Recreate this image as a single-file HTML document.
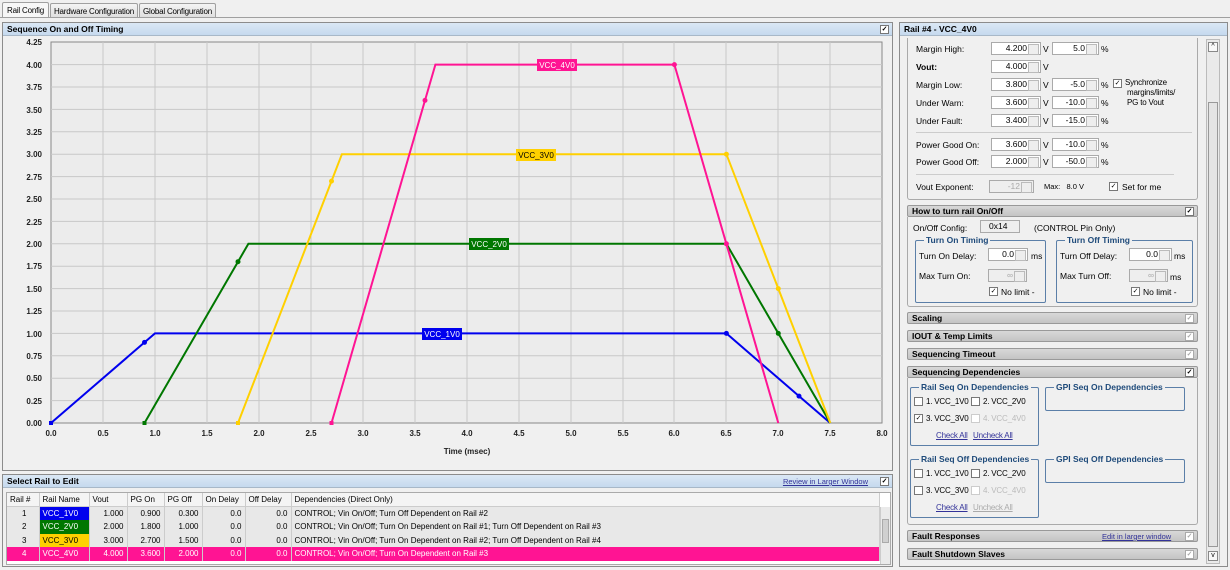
<!DOCTYPE html>
<html><head><meta charset="utf-8"><style>
*{box-sizing:border-box;margin:0;padding:0}
body{width:1230px;height:570px;background:#f0f0f0;font-family:"Liberation Sans",sans-serif;font-size:8.5px;color:#000;position:relative;overflow:hidden}
.a{position:absolute}
.tab{position:absolute;top:3px;height:15px;border:1px solid #a0a0a0;border-bottom:none;background:linear-gradient(#f4f4f4,#dedede);font-size:8px;padding:3px 0 0;text-align:center;border-radius:2px 2px 0 0;white-space:nowrap;overflow:hidden;letter-spacing:-0.2px}
.panel{position:absolute;border:1px solid #8c8c8c;background:#f0f0f0}
.hdr{position:absolute;left:0;right:0;top:0;height:13px;background:linear-gradient(#dbe8f5,#c5d9ee);border-bottom:1px solid #a8b8c8;font-weight:bold;font-size:8.5px;padding:1px 4px}
.cb{position:absolute;width:9px;height:9px;border:1px solid #777;background:#fff;font-size:7px;line-height:7px;text-align:center}
.sec{position:absolute;left:907px;width:291px;height:12px;background:linear-gradient(#d8d8d8,#c4c4c4);border:1px solid #999;border-radius:2px;font-weight:bold;font-size:8.5px;padding:0 4px;line-height:11px}
.sec .cb{right:3px;top:1px;border-color:#aaa;color:#aaa}
.in{position:absolute;height:13px;background:#fff;border:1px solid #aaa;text-align:right;padding-right:13px;line-height:11px;font-size:8.5px}
.in:after{content:"";position:absolute;right:1px;top:1px;width:9px;height:9px;border:1px solid #bbb;background:#eee}
.dis{background:#eee;color:#aaa}
.l{position:absolute;font-size:8.5px;white-space:nowrap}
.s{font-size:8px;letter-spacing:-0.2px}
.grp{position:absolute;border:1px solid #5b7fa8;border-radius:2px}
.gt{position:absolute;top:-6px;left:8px;background:#f0f0f0;color:#1e4a7a;font-weight:bold;padding:0 2px;font-size:8.5px;white-space:nowrap}
.lnk{color:#333399;text-decoration:underline}
table{border-collapse:collapse;font-size:8px}
td{height:13.5px;border-right:1px solid #ccc;padding:0 3px;white-space:nowrap}
</style></head><body>
<div class="tab" style="left:2px;top:2px;width:47px;height:16px;background:#f7f7f7">Rail Config</div>
<div class="tab" style="left:50px;width:88px">Hardware Configuration</div>
<div class="tab" style="left:139px;width:77px">Global Configuration</div>
<div class="a" style="left:0;top:17px;width:1230px;border-top:1px solid #a0a0a0"></div>

<div class="panel" style="left:2px;top:22px;width:891px;height:449px">
<div class="hdr">Sequence On and Off Timing<div class="cb" style="right:3px;top:2px">✓</div></div>
</div>
<svg class="a" style="left:0;top:0" width="895" height="470" font-family="Liberation Sans" font-size="8" font-weight="bold">
<rect x="51" y="42" width="831" height="381" fill="#ececec" stroke="#888"/>
<g stroke="#c8c8c8" stroke-width="1">
<line x1="103" y1="42" x2="103" y2="423"/><line x1="155" y1="42" x2="155" y2="423"/><line x1="207" y1="42" x2="207" y2="423"/><line x1="259" y1="42" x2="259" y2="423"/><line x1="311" y1="42" x2="311" y2="423"/><line x1="363" y1="42" x2="363" y2="423"/><line x1="415" y1="42" x2="415" y2="423"/><line x1="467" y1="42" x2="467" y2="423"/><line x1="519" y1="42" x2="519" y2="423"/><line x1="571" y1="42" x2="571" y2="423"/><line x1="623" y1="42" x2="623" y2="423"/><line x1="674" y1="42" x2="674" y2="423"/><line x1="726" y1="42" x2="726" y2="423"/><line x1="778" y1="42" x2="778" y2="423"/><line x1="830" y1="42" x2="830" y2="423"/>
<line x1="51" y1="400.6" x2="882" y2="400.6"/><line x1="51" y1="378.2" x2="882" y2="378.2"/><line x1="51" y1="355.8" x2="882" y2="355.8"/><line x1="51" y1="333.4" x2="882" y2="333.4"/><line x1="51" y1="311" x2="882" y2="311"/><line x1="51" y1="288.6" x2="882" y2="288.6"/><line x1="51" y1="266.2" x2="882" y2="266.2"/><line x1="51" y1="243.8" x2="882" y2="243.8"/><line x1="51" y1="221.4" x2="882" y2="221.4"/><line x1="51" y1="199" x2="882" y2="199"/><line x1="51" y1="176.6" x2="882" y2="176.6"/><line x1="51" y1="154.2" x2="882" y2="154.2"/><line x1="51" y1="131.8" x2="882" y2="131.8"/><line x1="51" y1="109.4" x2="882" y2="109.4"/><line x1="51" y1="87" x2="882" y2="87"/><line x1="51" y1="64.6" x2="882" y2="64.6"/>
</g>
<g text-anchor="end" fill="#222">
<text x="42" y="426">0.00</text><text x="42" y="404">0.25</text><text x="42" y="381">0.50</text><text x="42" y="359">0.75</text><text x="42" y="337">1.00</text><text x="42" y="314">1.25</text><text x="42" y="292">1.50</text><text x="42" y="269">1.75</text><text x="42" y="247">2.00</text><text x="42" y="225">2.25</text><text x="42" y="202">2.50</text><text x="42" y="180">2.75</text><text x="42" y="157">3.00</text><text x="42" y="135">3.25</text><text x="42" y="113">3.50</text><text x="42" y="90">3.75</text><text x="42" y="68">4.00</text><text x="42" y="45">4.25</text>
</g>
<g text-anchor="middle" fill="#222">
<text x="51" y="436">0.0</text><text x="103" y="436">0.5</text><text x="155" y="436">1.0</text><text x="207" y="436">1.5</text><text x="259" y="436">2.0</text><text x="311" y="436">2.5</text><text x="363" y="436">3.0</text><text x="415" y="436">3.5</text><text x="467" y="436">4.0</text><text x="519" y="436">4.5</text><text x="571" y="436">5.0</text><text x="623" y="436">5.5</text><text x="674" y="436">6.0</text><text x="726" y="436">6.5</text><text x="778" y="436">7.0</text><text x="830" y="436">7.5</text><text x="882" y="436">8.0</text>
<text x="467" y="454">Time (msec)</text>
</g>
<g fill="none" stroke-width="2">
<polyline stroke="#0000ee" points="51,423 144.5,342.4 155,333.4 726.4,333.4 799,396.1 830.3,423"/>
<polyline stroke="#007700" points="144.5,423 238,261.7 248.4,243.8 726.4,243.8 778.3,333.4 830.3,423"/>
<polyline stroke="#ffd000" points="238,423 331.5,181.1 341.9,154.2 726.4,154.2 778.3,288.6 830.3,423"/>
<polyline stroke="#ff1493" points="331.5,423 425,100.4 435.4,64.6 674.4,64.6 778.3,423"/>
</g>
<g fill="#0000ee"><rect x="49" y="421" width="4" height="4"/><circle cx="144.5" cy="342.4" r="2.5"/><circle cx="726.4" cy="333.4" r="2.5"/><circle cx="799" cy="396.1" r="2.5"/></g>
<g fill="#007700"><rect x="142.5" y="421" width="4" height="4"/><circle cx="238" cy="261.7" r="2.5"/><circle cx="778.3" cy="333.4" r="2.5"/></g>
<g fill="#ffd000"><rect x="236" y="421" width="4" height="4"/><circle cx="331.5" cy="181.1" r="2.5"/><circle cx="726.4" cy="154.2" r="2.5"/><circle cx="778.3" cy="288.6" r="2.5"/></g>
<g fill="#ff1493"><rect x="329.5" y="421" width="4" height="4"/><circle cx="425" cy="100.4" r="2.5"/><circle cx="674.4" cy="64.6" r="2.5"/><circle cx="726.4" cy="243.8" r="2.5"/></g>
<g font-weight="normal">
<rect x="537" y="59" width="40" height="12" fill="#ff1493"/><text x="557" y="68" text-anchor="middle" fill="#fff">VCC_4V0</text>
<rect x="516" y="149" width="40" height="12" fill="#ffd000"/><text x="536" y="158" text-anchor="middle" fill="#000">VCC_3V0</text>
<rect x="469" y="238" width="40" height="12" fill="#007700"/><text x="489" y="247" text-anchor="middle" fill="#fff">VCC_2V0</text>
<rect x="422" y="328" width="40" height="12" fill="#0000ee"/><text x="442" y="337" text-anchor="middle" fill="#fff">VCC_1V0</text>
</g>
</svg>

<div class="panel" style="left:2px;top:474px;width:891px;height:93px">
<div class="hdr">Select Rail to Edit<span class="lnk" style="position:absolute;right:24px;top:2px;font-weight:normal;font-size:7.5px">Review in Larger Window</span><div class="cb" style="right:3px;top:2px">✓</div></div>
<div class="a" style="left:3px;top:17px;width:885px;height:73px;background:#fff;border:1px solid #aaa;overflow:hidden">
<table style="width:873px">
<tr style="background:#f4f4f4;border-bottom:1px solid #ccc"><td style="width:32px">Rail #</td><td style="width:50px">Rail Name</td><td style="width:38px">Vout</td><td style="width:37px">PG On</td><td style="width:38px">PG Off</td><td style="width:43px">On Delay</td><td style="width:46px">Off Delay</td><td>Dependencies (Direct Only)</td></tr>
<tr style="background:#e8e8e8"><td style="padding-left:15px">1</td><td style="background:#0000ee;color:#fff">VCC_1V0</td><td align="right">1.000</td><td align="right">0.900</td><td align="right">0.300</td><td align="right">0.0</td><td align="right">0.0</td><td>CONTROL; Vin On/Off; Turn Off Dependent on Rail #2</td></tr>
<tr style="background:#e8e8e8"><td style="padding-left:15px">2</td><td style="background:#007700;color:#fff">VCC_2V0</td><td align="right">2.000</td><td align="right">1.800</td><td align="right">1.000</td><td align="right">0.0</td><td align="right">0.0</td><td>CONTROL; Vin On/Off; Turn On Dependent on Rail #1; Turn Off Dependent on Rail #3</td></tr>
<tr style="background:#e8e8e8"><td style="padding-left:15px">3</td><td style="background:#ffd000">VCC_3V0</td><td align="right">3.000</td><td align="right">2.700</td><td align="right">1.500</td><td align="right">0.0</td><td align="right">0.0</td><td>CONTROL; Vin On/Off; Turn On Dependent on Rail #2; Turn Off Dependent on Rail #4</td></tr>
<tr style="background:#ff1493;color:#fff"><td style="padding-left:15px">4</td><td>VCC_4V0</td><td align="right">4.000</td><td align="right">3.600</td><td align="right">2.000</td><td align="right">0.0</td><td align="right">0.0</td><td>CONTROL; Vin On/Off; Turn On Dependent on Rail #3</td></tr>
</table>
<div class="a" style="right:0;top:14px;width:10px;height:58px;background:#eaeaea;border-left:1px solid #ccc"><div class="a" style="left:1px;top:12px;width:7px;height:24px;background:#d0d0d0;border:1px solid #aaa"></div></div>
</div>
</div>

<div class="panel" style="left:899px;top:22px;width:329px;height:545px">
<div class="hdr">Rail #4 - VCC_4V0</div>
<div class="a" style="left:306px;top:16px;width:14px;height:525px;background:#eaeaea;border:1px solid #bbb">
<div class="a" style="left:1px;top:2px;width:10px;height:10px;border:1px solid #888;background:#f8f8f8;font-size:7px;text-align:center;line-height:8px">^</div>
<div class="a" style="left:1px;top:62px;width:10px;height:445px;border:1px solid #999;background:#e4e4e4"></div>
<div class="a" style="left:1px;bottom:2px;width:10px;height:10px;border:1px solid #888;background:#f8f8f8;font-size:7px;text-align:center;line-height:8px">v</div>
</div>
</div>
<div class="a" style="left:907px;top:38px;width:291px;height:162px;border:1px solid #aaa;border-top:none;border-radius:0 0 3px 3px"></div>
<div class="l" style="left:916px;top:44px">Margin High:</div><div class="in" style="left:991px;top:42px;width:50px">4.200</div><div class="l" style="left:1043px;top:44px">V</div><div class="in" style="left:1052px;top:42px;width:47px">5.0</div><div class="l" style="left:1101px;top:44px">%</div>
<div class="l" style="left:916px;top:62px;font-weight:bold">Vout:</div><div class="in" style="left:991px;top:60px;width:50px">4.000</div><div class="l" style="left:1043px;top:62px">V</div>
<div class="l" style="left:916px;top:80px">Margin Low:</div><div class="in" style="left:991px;top:78px;width:50px">3.800</div><div class="l" style="left:1043px;top:80px">V</div><div class="in" style="left:1052px;top:78px;width:47px">-5.0</div><div class="l" style="left:1101px;top:80px">%</div>
<div class="cb" style="left:1113px;top:79px">✓</div><div class="l s" style="left:1125px;top:78px;line-height:10px">Synchronize<br>&nbsp;margins/limits/<br>&nbsp;PG to Vout</div>
<div class="l" style="left:916px;top:98px">Under Warn:</div><div class="in" style="left:991px;top:96px;width:50px">3.600</div><div class="l" style="left:1043px;top:98px">V</div><div class="in" style="left:1052px;top:96px;width:47px">-10.0</div><div class="l" style="left:1101px;top:98px">%</div>
<div class="l" style="left:916px;top:116px">Under Fault:</div><div class="in" style="left:991px;top:114px;width:50px">3.400</div><div class="l" style="left:1043px;top:116px">V</div><div class="in" style="left:1052px;top:114px;width:47px">-15.0</div><div class="l" style="left:1101px;top:116px">%</div>
<div class="a" style="left:916px;top:132px;width:276px;border-top:1px solid #ccc"></div>
<div class="l" style="left:916px;top:140px">Power Good On:</div><div class="in" style="left:991px;top:138px;width:50px">3.600</div><div class="l" style="left:1043px;top:140px">V</div><div class="in" style="left:1052px;top:138px;width:47px">-10.0</div><div class="l" style="left:1101px;top:140px">%</div>
<div class="l" style="left:916px;top:157px">Power Good Off:</div><div class="in" style="left:991px;top:155px;width:50px">2.000</div><div class="l" style="left:1043px;top:157px">V</div><div class="in" style="left:1052px;top:155px;width:47px">-50.0</div><div class="l" style="left:1101px;top:157px">%</div>
<div class="a" style="left:916px;top:174px;width:258px;border-top:1px solid #ccc"></div>
<div class="l" style="left:916px;top:182px">Vout Exponent:</div><div class="in dis" style="left:989px;top:180px;width:45px">-12</div><div class="l" style="left:1044px;top:182px;font-size:7.5px">Max:&nbsp;&nbsp; 8.0 V</div>
<div class="cb" style="left:1109px;top:182px">✓</div><div class="l" style="left:1122px;top:182px">Set for me</div>

<div class="sec" style="top:205px">How to turn rail On/Off<div class="cb" style="color:#000;border-color:#777">✓</div></div>
<div class="a" style="left:907px;top:217px;width:291px;height:90px;border:1px solid #aaa;border-top:none;border-radius:0 0 3px 3px"></div>
<div class="l" style="left:913px;top:223px">On/Off Config:</div><div class="a" style="left:980px;top:220px;width:40px;height:13px;background:#eee;border:1px solid #aaa;padding-left:8px;line-height:11px">0x14</div><div class="l" style="left:1034px;top:223px">(CONTROL Pin Only)</div>
<div class="grp" style="left:915px;top:240px;width:131px;height:63px"><div class="gt">Turn On Timing</div></div>
<div class="l" style="left:919px;top:251px">Turn On Delay:</div><div class="in" style="left:988px;top:248px;width:40px">0.0</div><div class="l" style="left:1031px;top:251px">ms</div>
<div class="l" style="left:919px;top:271px">Max Turn On:</div><div class="in dis" style="left:988px;top:269px;width:39px">∞</div>
<div class="cb" style="left:989px;top:287px">✓</div><div class="l" style="left:1001px;top:287px">No limit -</div>
<div class="grp" style="left:1056px;top:240px;width:137px;height:63px"><div class="gt">Turn Off Timing</div></div>
<div class="l" style="left:1060px;top:251px">Turn Off Delay:</div><div class="in" style="left:1129px;top:248px;width:43px">0.0</div><div class="l" style="left:1174px;top:251px">ms</div>
<div class="l" style="left:1060px;top:271px">Max Turn Off:</div><div class="in dis" style="left:1129px;top:269px;width:39px">∞</div><div class="l" style="left:1170px;top:272px">ms</div>
<div class="cb" style="left:1131px;top:287px">✓</div><div class="l" style="left:1143px;top:287px">No limit -</div>

<div class="sec" style="top:312px">Scaling<div class="cb">✓</div></div>
<div class="sec" style="top:330px">IOUT &amp; Temp Limits<div class="cb">✓</div></div>
<div class="sec" style="top:348px">Sequencing Timeout<div class="cb">✓</div></div>
<div class="sec" style="top:366px">Sequencing Dependencies<div class="cb" style="color:#000;border-color:#777">✓</div></div>
<div class="a" style="left:907px;top:378px;width:291px;height:147px;border:1px solid #aaa;border-top:none;border-radius:0 0 3px 3px"></div>
<div class="grp" style="left:910px;top:387px;width:129px;height:59px"><div class="gt">Rail Seq On Dependencies</div></div>
<div class="grp" style="left:1045px;top:387px;width:140px;height:24px"><div class="gt">GPI Seq On Dependencies</div></div>
<div class="cb" style="left:914px;top:397px"></div><div class="l s" style="left:926px;top:397px">1. VCC_1V0</div><div class="cb" style="left:971px;top:397px"></div><div class="l s" style="left:983px;top:397px">2. VCC_2V0</div>
<div class="cb" style="left:914px;top:414px">✓</div><div class="l s" style="left:926px;top:414px">3. VCC_3V0</div><div class="cb" style="left:971px;top:414px;border-color:#ccc"></div><div class="l s" style="left:983px;top:414px;color:#bbb">4. VCC_4V0</div>
<div class="l lnk s" style="left:936px;top:431px">Check All</div><div class="l lnk s" style="left:973px;top:431px">Uncheck All</div>
<div class="grp" style="left:910px;top:459px;width:129px;height:59px"><div class="gt">Rail Seq Off Dependencies</div></div>
<div class="grp" style="left:1045px;top:459px;width:140px;height:24px"><div class="gt">GPI Seq Off Dependencies</div></div>
<div class="cb" style="left:914px;top:469px"></div><div class="l s" style="left:926px;top:469px">1. VCC_1V0</div><div class="cb" style="left:971px;top:469px"></div><div class="l s" style="left:983px;top:469px">2. VCC_2V0</div>
<div class="cb" style="left:914px;top:486px"></div><div class="l s" style="left:926px;top:486px">3. VCC_3V0</div><div class="cb" style="left:971px;top:486px;border-color:#ccc"></div><div class="l s" style="left:983px;top:486px;color:#bbb">4. VCC_4V0</div>
<div class="l lnk s" style="left:936px;top:503px">Check All</div><div class="l s" style="left:973px;top:503px;color:#aaa;text-decoration:underline">Uncheck All</div>
<div class="sec" style="top:530px">Fault Responses<span class="lnk" style="position:absolute;left:194px;top:0;font-weight:normal;font-size:7.5px">Edit in larger window</span><div class="cb">✓</div></div>
<div class="sec" style="top:548px">Fault Shutdown Slaves<div class="cb">✓</div></div>
</body></html>
